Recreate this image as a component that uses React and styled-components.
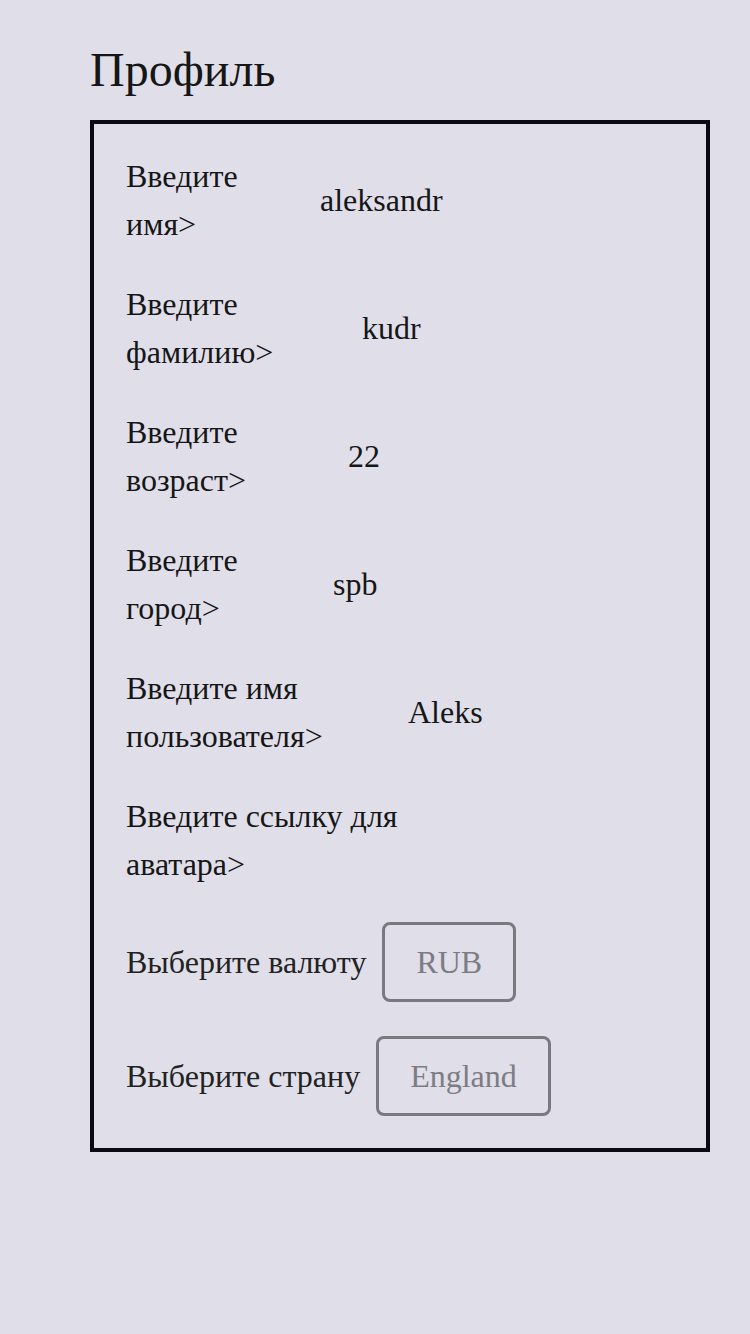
import React from 'react';
import styled, { createGlobalStyle } from 'styled-components';

const fields = [
  { lines: ['Введите', 'имя>'], value: 'aleksandr', width: 194 },
  { lines: ['Введите', 'фамилию>'], value: 'kudr', width: 236 },
  { lines: ['Введите', 'возраст>'], value: '22', width: 222 },
  { lines: ['Введите', 'город>'], value: 'spb', width: 207 },
  { lines: ['Введите имя', 'пользователя>'], value: 'Aleks', width: 282 },
  { lines: ['Введите ссылку для', 'аватара>'], value: '', width: 300 },
];

const selects = [
  { label: 'Выберите валюту', value: 'RUB' },
  { label: 'Выберите страну', value: 'England' },
];

const GlobalStyle = createGlobalStyle`
  html, body {
    margin: 0;
    padding: 0;
    background: #e0dfe9;
  }

  body {
    font-family: "Liberation Serif", "Times New Roman", serif;
    color: #161616;
  }
`;

export default function App() {
  return (
    <>
      <GlobalStyle />
      <Page>
        <Title>Профиль</Title>
        <Card>
          {fields.map(({ lines, value, width }) => (
            <FieldRow key={lines.join(' ')}>
              <Label $width={width}>
                {lines[0]}
                <br />
                {lines[1]}
              </Label>
              {value && <Value>{value}</Value>}
            </FieldRow>
          ))}
          {selects.map(({ label, value }) => (
            <SelectRow key={label}>
              <SelectLabel>{label}</SelectLabel>
              <SelectButton type="button">{value}</SelectButton>
            </SelectRow>
          ))}
        </Card>
      </Page>
    </>
  );
}

const Page = styled.main`
  padding: 42px 40px 0 90px;
  min-height: 1334px;
  box-sizing: border-box;
`;

const Title = styled.h1`
  margin: 0 0 23px;
  font-size: 48px;
  font-weight: 400;
  line-height: 55px;
`;

const Card = styled.section`
  display: flex;
  flex-direction: column;
  gap: 32px;
  border: 4px solid #0b0a12;
  padding: 28px 32px 32px;
`;

const FieldRow = styled.div`
  display: flex;
  align-items: center;
  font-size: 32px;
  line-height: 48px;
`;

const Label = styled.span`
  flex: 0 0 ${(p) => p.$width}px;
`;

const Value = styled.span`
  line-height: 37px;
`;

const SelectRow = styled.div`
  display: flex;
  align-items: center;
  gap: 16px;
  margin-top: 2px;
  font-size: 32px;
`;

const SelectLabel = styled.span`
  color: #222;
`;

const SelectButton = styled.button`
  font: inherit;
  line-height: 38px;
  padding: 18px 31px;
  border: 3px solid #7a797f;
  border-radius: 8px;
  background: transparent;
  color: #7d7c84;
`;
